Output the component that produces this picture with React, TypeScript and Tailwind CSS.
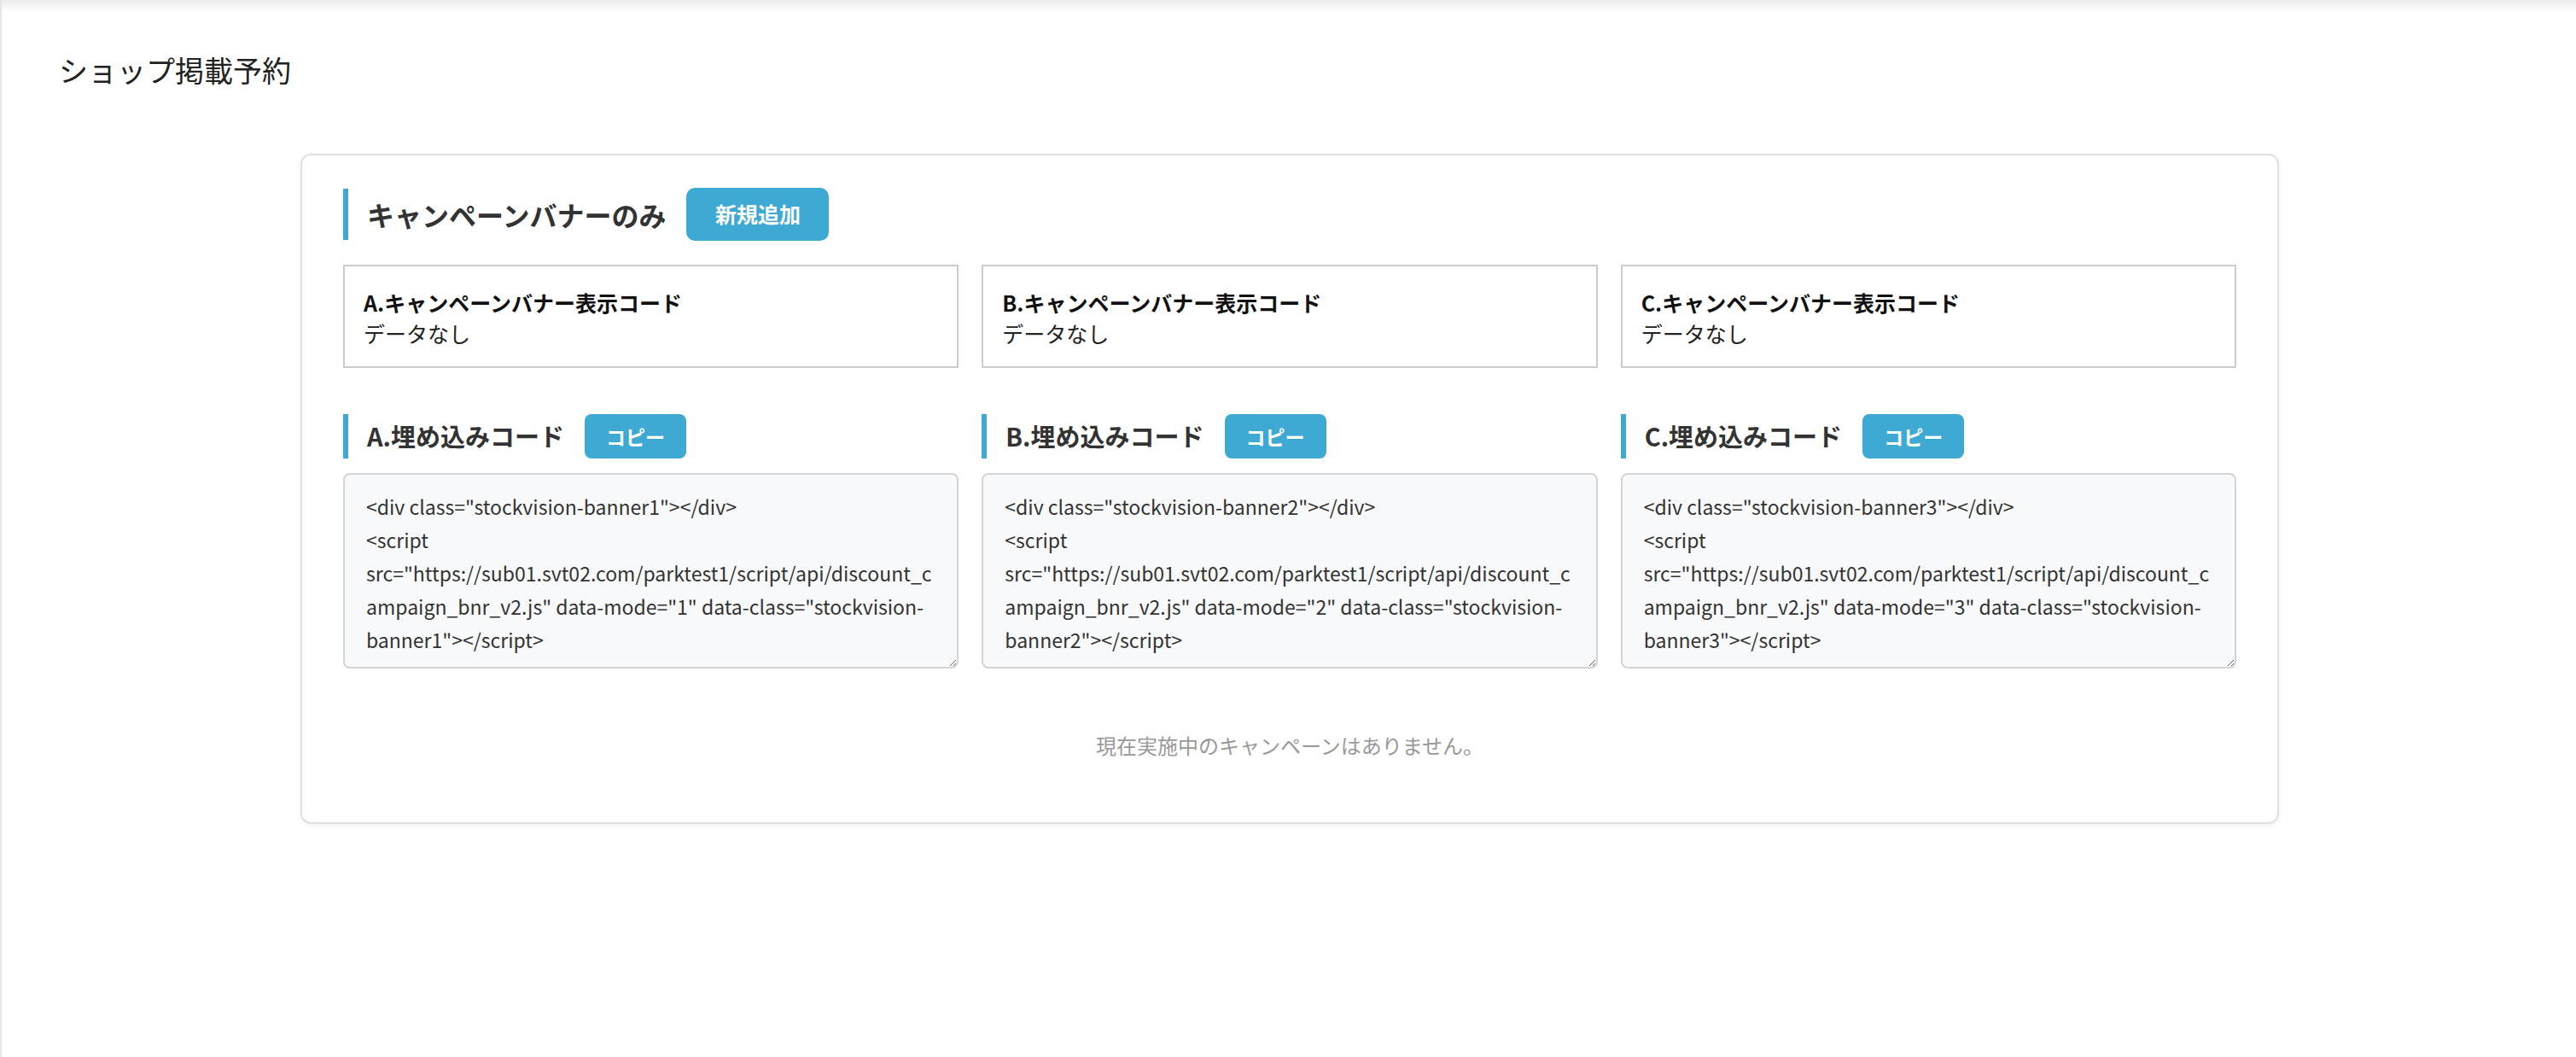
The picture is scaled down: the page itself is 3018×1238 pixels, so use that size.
const font = { fontFamily: '"Noto Sans CJK JP", "Noto Sans", sans-serif' };

const cols = ['A', 'B', 'C'];

function code(n: number) {
  return `<div class="stockvision-banner${n}"></div>\n<script src="https://sub01.svt02.com/parktest1/script/api/discount_campaign_bnr_v2.js" data-mode="${n}" data-class="stockvision-banner${n}"></script>`;
}

export default function App() {
  return (
    <div style={font} className="min-h-[1238px] w-full bg-white border-l-2 border-[#e5e5e5] text-[#333]">
      <div className="h-[14px] bg-gradient-to-b from-[#ececec] to-white" />
      <h1 className="pl-[67px] pt-[46px] text-[34px] leading-[44px] font-normal text-[#222]">ショップ掲載予約</h1>

      <div className="mx-auto mt-[76px] ml-[350px] w-[2318px] rounded-[12px] border-2 border-[#e0e0e0] bg-white px-[48px] pt-[38px] pb-[72px] shadow-[0_2px_6px_rgba(0,0,0,0.06)]">
        <div className="flex items-center">
          <div className="flex h-[60px] items-center border-l-[6px] border-[#3eaad4] pl-[22px]">
            <span className="text-[32px] font-bold text-[#333]">キャンペーンバナーのみ</span>
          </div>
          <button className="ml-[24px] h-[62px] w-[167px] rounded-[10px] bg-[#3eaad4] text-[25px] font-bold text-white">新規追加</button>
        </div>

        <div className="mt-[28px] grid grid-cols-3 gap-[27px]">
          {cols.map((c) => (
            <div key={c} className="h-[121px] border-2 border-[#cccccc] px-[22px] pt-[24px]">
              <div className="text-[25px] font-bold leading-[36px] text-[#111]">{c}.キャンペーンバナー表示コード</div>
              <div className="text-[25px] leading-[36px] text-[#222]">データなし</div>
            </div>
          ))}
        </div>

        <div className="mt-[54px] grid grid-cols-3 gap-[27px]">
          {cols.map((c, i) => (
            <div key={c}>
              <div className="flex items-center">
                <div className="flex h-[52px] items-center border-l-[6px] border-[#3eaad4] pl-[22px]">
                  <span className="text-[29px] font-bold text-[#333]">{c}.埋め込みコード</span>
                </div>
                <button className="ml-[24px] h-[52px] w-[119px] rounded-[8px] bg-[#3eaad4] text-[23px] font-bold text-white">コピー</button>
              </div>
              <textarea
                readOnly
                value={code(i + 1)}
                style={font}
                className="mt-[17px] block h-[229px] w-full resize-y rounded-[8px] border-2 border-[#d4d4d4] bg-[#f8f9fa] px-[25px] pt-[18px] text-[23px] leading-[39px] text-[#333] outline-none"
              />
            </div>
          ))}
        </div>

        <p className="mt-[72px] text-center text-[24px] text-[#999]">現在実施中のキャンペーンはありません。</p>
      </div>
    </div>
  );
}
